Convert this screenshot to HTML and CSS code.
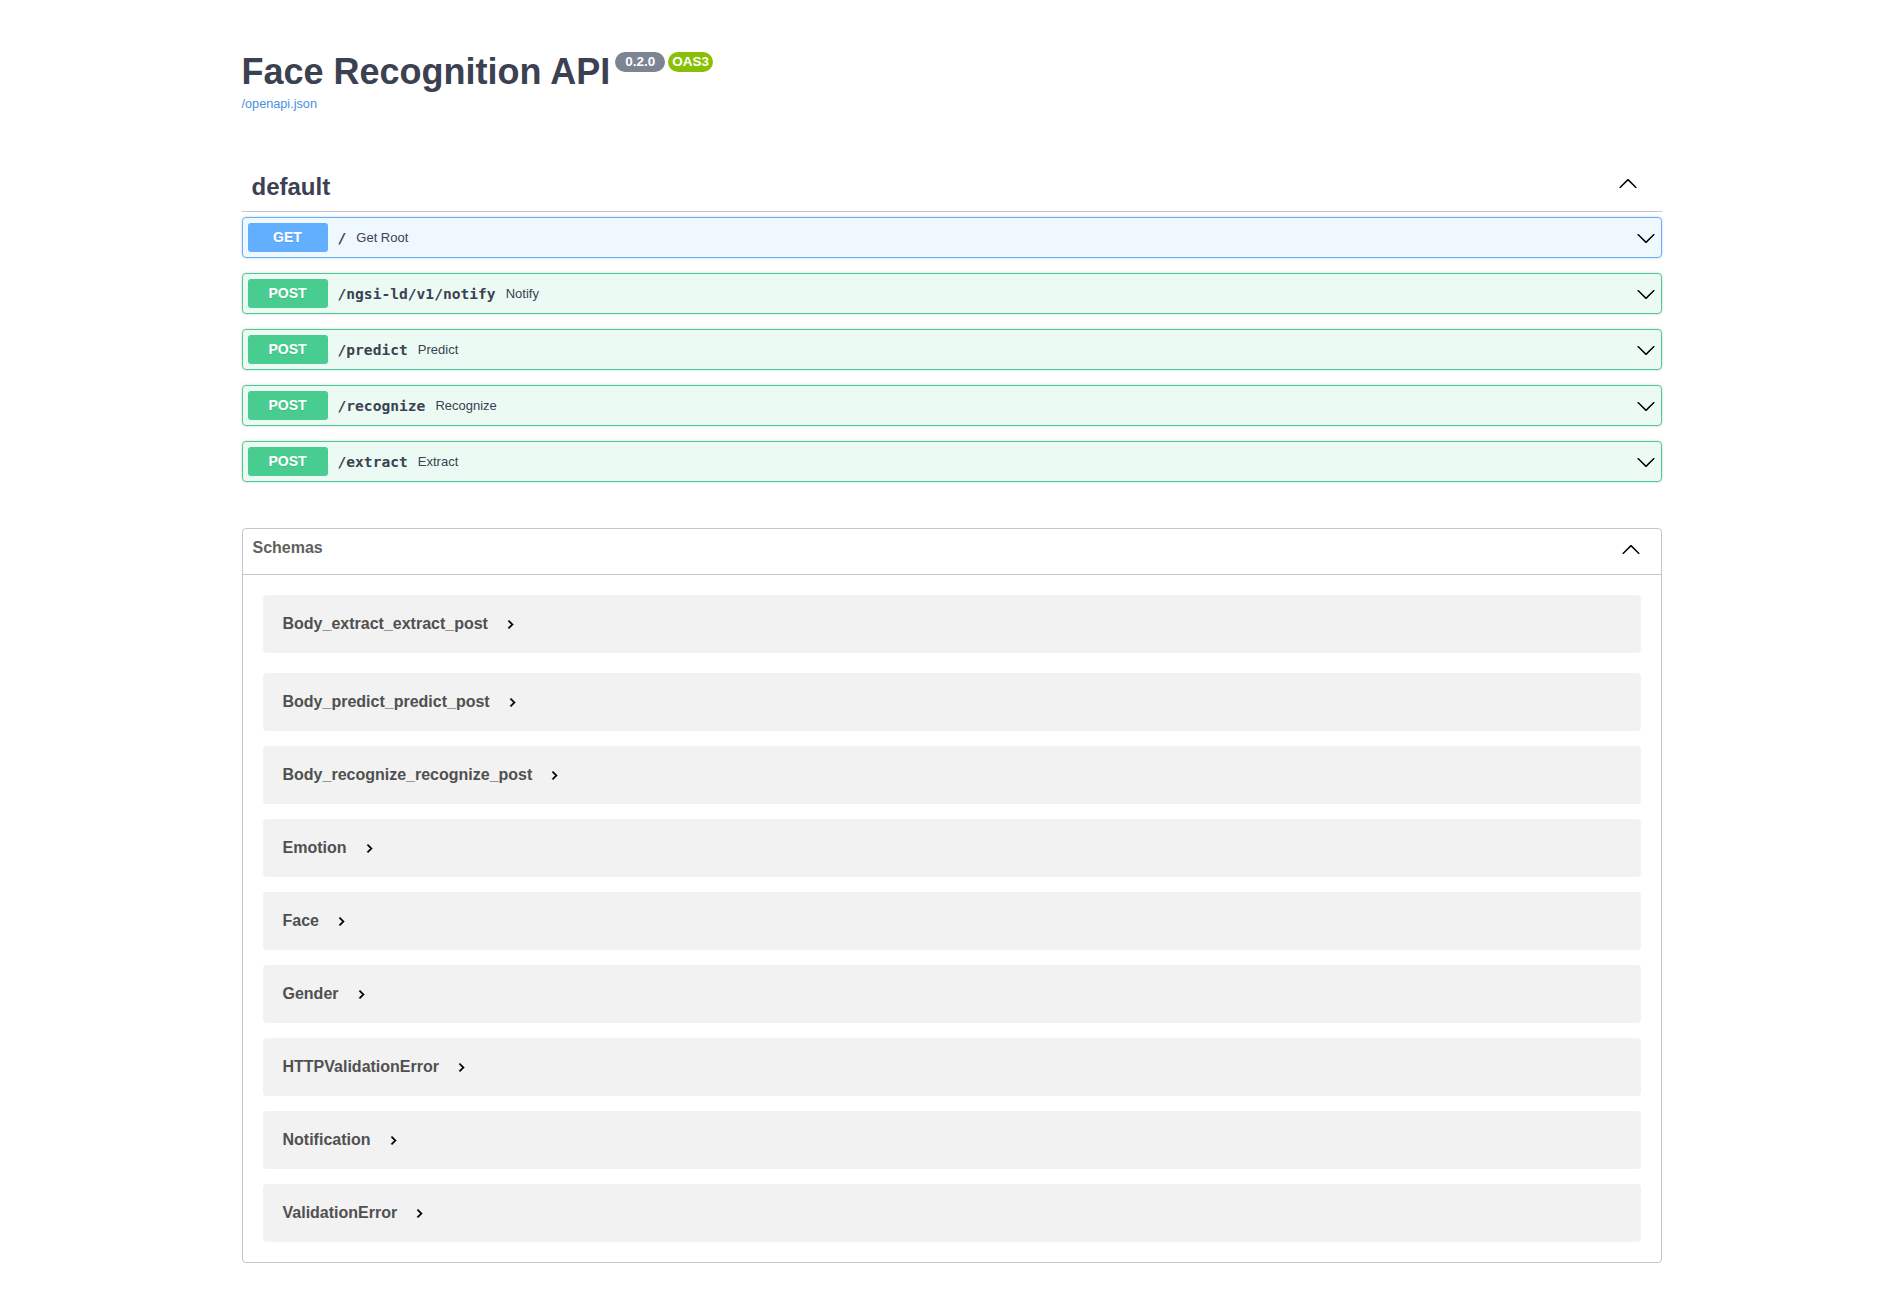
FILE: index.html
```html
<!DOCTYPE html>
<html lang="en">
<head>
<meta charset="utf-8">
<title>Face Recognition API - Swagger UI</title>
<link rel="stylesheet" href="styles.css">
</head>
<body>
<div class="wrapper">
  <div class="info">
    <h2 class="title">
      <span class="title-text">Face Recognition API</span>
      <span class="badge badge-version">0.2.0</span>
      <span class="badge badge-oas">OAS3</span>
    </h2>
    <div class="link-row"><a class="link" href="#">/openapi.json</a></div>
  </div>

  <div class="tag-section">
    <h3 class="tag">
      <span class="tag-name">default</span>
      <svg class="tag-arrow" width="20" height="20" viewBox="0 0 20 20"><path d="M17.418 14.908c.272.268.709.268.979 0s.271-.701 0-.969l-7.908-7.83c-.27-.268-.707-.268-.979 0l-7.908 7.83c-.27.268-.27.701 0 .969.271.268.709.268.979 0L10 7.767l7.418 7.141z"/></svg>
    </h3>

    <div class="opblock opblock-get">
      <div class="summary">
        <span class="method">GET</span>
        <div class="path-desc">
          <span class="path">/</span>
          <span class="desc">Get Root</span>
        </div>
        <svg class="op-arrow" width="20" height="20" viewBox="0 0 20 20"><path d="M17.418 6.109c.272-.268.709-.268.979 0s.271.701 0 .969l-7.908 7.83c-.27.268-.707.268-.979 0l-7.908-7.83c-.27-.268-.27-.701 0-.969.271-.268.709-.268.979 0L10 13.25l7.418-7.141z"/></svg>
      </div>
    </div>

    <div class="opblock opblock-post">
      <div class="summary">
        <span class="method">POST</span>
        <div class="path-desc">
          <span class="path">/ngsi-ld/v1/notify</span>
          <span class="desc">Notify</span>
        </div>
        <svg class="op-arrow" width="20" height="20" viewBox="0 0 20 20"><path d="M17.418 6.109c.272-.268.709-.268.979 0s.271.701 0 .969l-7.908 7.83c-.27.268-.707.268-.979 0l-7.908-7.83c-.27-.268-.27-.701 0-.969.271-.268.709-.268.979 0L10 13.25l7.418-7.141z"/></svg>
      </div>
    </div>

    <div class="opblock opblock-post">
      <div class="summary">
        <span class="method">POST</span>
        <div class="path-desc">
          <span class="path">/predict</span>
          <span class="desc">Predict</span>
        </div>
        <svg class="op-arrow" width="20" height="20" viewBox="0 0 20 20"><path d="M17.418 6.109c.272-.268.709-.268.979 0s.271.701 0 .969l-7.908 7.83c-.27.268-.707.268-.979 0l-7.908-7.83c-.27-.268-.27-.701 0-.969.271-.268.709-.268.979 0L10 13.25l7.418-7.141z"/></svg>
      </div>
    </div>

    <div class="opblock opblock-post">
      <div class="summary">
        <span class="method">POST</span>
        <div class="path-desc">
          <span class="path">/recognize</span>
          <span class="desc">Recognize</span>
        </div>
        <svg class="op-arrow" width="20" height="20" viewBox="0 0 20 20"><path d="M17.418 6.109c.272-.268.709-.268.979 0s.271.701 0 .969l-7.908 7.83c-.27.268-.707.268-.979 0l-7.908-7.83c-.27-.268-.27-.701 0-.969.271-.268.709-.268.979 0L10 13.25l7.418-7.141z"/></svg>
      </div>
    </div>

    <div class="opblock opblock-post">
      <div class="summary">
        <span class="method">POST</span>
        <div class="path-desc">
          <span class="path">/extract</span>
          <span class="desc">Extract</span>
        </div>
        <svg class="op-arrow" width="20" height="20" viewBox="0 0 20 20"><path d="M17.418 6.109c.272-.268.709-.268.979 0s.271.701 0 .969l-7.908 7.83c-.27.268-.707.268-.979 0l-7.908-7.83c-.27-.268-.27-.701 0-.969.271-.268.709-.268.979 0L10 13.25l7.418-7.141z"/></svg>
      </div>
    </div>
  </div>

  <section class="models">
    <h4 class="models-head">
      <span class="models-title">Schemas</span>
      <svg class="models-arrow" width="20" height="20" viewBox="0 0 20 20"><path d="M17.418 14.908c.272.268.709.268.979 0s.271-.701 0-.969l-7.908-7.83c-.27-.268-.707-.268-.979 0l-7.908 7.83c-.27.268-.27.701 0 .969.271.268.709.268.979 0L10 7.767l7.418 7.141z"/></svg>
    </h4>
    <div class="models-list">
      <div class="model"><span class="model-title">Body_extract_extract_post</span><svg class="model-toggle" width="17" height="17" viewBox="0 0 24 24"><path d="M10 6L8.59 7.41 13.17 12l-4.58 4.59L10 18l6-6z"/></svg></div>
      <div class="model"><span class="model-title">Body_predict_predict_post</span><svg class="model-toggle" width="17" height="17" viewBox="0 0 24 24"><path d="M10 6L8.59 7.41 13.17 12l-4.58 4.59L10 18l6-6z"/></svg></div>
      <div class="model"><span class="model-title">Body_recognize_recognize_post</span><svg class="model-toggle" width="17" height="17" viewBox="0 0 24 24"><path d="M10 6L8.59 7.41 13.17 12l-4.58 4.59L10 18l6-6z"/></svg></div>
      <div class="model"><span class="model-title">Emotion</span><svg class="model-toggle" width="17" height="17" viewBox="0 0 24 24"><path d="M10 6L8.59 7.41 13.17 12l-4.58 4.59L10 18l6-6z"/></svg></div>
      <div class="model"><span class="model-title">Face</span><svg class="model-toggle" width="17" height="17" viewBox="0 0 24 24"><path d="M10 6L8.59 7.41 13.17 12l-4.58 4.59L10 18l6-6z"/></svg></div>
      <div class="model"><span class="model-title">Gender</span><svg class="model-toggle" width="17" height="17" viewBox="0 0 24 24"><path d="M10 6L8.59 7.41 13.17 12l-4.58 4.59L10 18l6-6z"/></svg></div>
      <div class="model"><span class="model-title">HTTPValidationError</span><svg class="model-toggle" width="17" height="17" viewBox="0 0 24 24"><path d="M10 6L8.59 7.41 13.17 12l-4.58 4.59L10 18l6-6z"/></svg></div>
      <div class="model"><span class="model-title">Notification</span><svg class="model-toggle" width="17" height="17" viewBox="0 0 24 24"><path d="M10 6L8.59 7.41 13.17 12l-4.58 4.59L10 18l6-6z"/></svg></div>
      <div class="model"><span class="model-title">ValidationError</span><svg class="model-toggle" width="17" height="17" viewBox="0 0 24 24"><path d="M10 6L8.59 7.41 13.17 12l-4.58 4.59L10 18l6-6z"/></svg></div>
    </div>
  </section>
</div>
</body>
</html>
```

FILE: styles.css
```css
html, body {
  margin: 0;
  padding: 0;
  background: #fff;
}

body {
  font-family: "Liberation Sans", Arial, sans-serif;
  color: #3b4151;
}

.wrapper {
  box-sizing: border-box;
  max-width: 1460px;
  margin: 0 auto;
  padding: 0 20px;
}

/* ---------- info ---------- */
.info {
  padding-top: 51px;
}

.title {
  display: flex;
  align-items: flex-start;
  margin: 0;
  font-size: 36px;
  line-height: 41px;
  font-weight: 700;
  color: #3b4151;
}

.badge {
  display: inline-block;
  margin-top: 1px;
  height: 20px;
  line-height: 20px;
  font-size: 13.5px;
  font-weight: 700;
  color: #fff;
  border-radius: 57px;
}

.badge-version {
  margin-left: 5px;
  padding: 0 10px;
  background: #7d8492;
}

.badge-oas {
  margin-left: 3px;
  padding: 0 4px;
  background: #89bf04;
}

.link-row {
  margin-top: 3px;
  line-height: 15px;
}

.link {
  font-size: 12.7px;
  color: #4990e2;
  text-decoration: none;
}

/* ---------- tag section ---------- */
.tag-section {
  display: flex;
  flex-direction: column;
  margin-top: 51px;
}

.tag {
  display: flex;
  align-items: flex-start;
  margin: 0 0 5px;
  padding: 10px 20px 10px 10px;
  border-bottom: 1px solid rgba(59, 65, 81, 0.3);
  font-size: 24px;
  line-height: 28px;
  font-weight: 700;
  color: #3b4151;
}

.tag-name {
  flex: 1;
}

.tag-arrow {
  margin-right: 4px;
  fill: #000;
}

/* ---------- operation blocks ---------- */
.opblock {
  margin: 0 0 15px;
  border: 1px solid #000;
  border-radius: 4px;
  box-shadow: 0 0 3px rgba(0, 0, 0, 0.19);
}

.opblock-get {
  background: rgba(97, 175, 254, 0.1);
  border-color: #61affe;
}

.opblock-post {
  background: rgba(73, 204, 144, 0.1);
  border-color: #49cc90;
}

.summary {
  display: flex;
  align-items: center;
  padding: 5px;
}

.method {
  min-width: 80px;
  padding: 6px 0;
  border-radius: 3px;
  font-size: 14px;
  line-height: 17px;
  font-weight: 700;
  color: #fff;
  text-align: center;
  text-shadow: 0 1px 0 rgba(0, 0, 0, 0.1);
}

.opblock-get .method {
  background: #61affe;
}

.opblock-post .method {
  background: #49cc90;
}

.path-desc {
  flex: 1;
  display: flex;
  align-items: center;
  gap: 10px;
  padding: 0 10px;
}

.path {
  font-family: "DejaVu Sans Mono", "Liberation Mono", monospace;
  font-size: 14.6px;
  font-weight: 700;
  color: #3b4151;
}

.desc {
  font-size: 13px;
  color: #3b4151;
}

.op-arrow {
  flex: none;
  fill: #000;
}

/* ---------- models ---------- */
.models {
  margin: 31px 0 30px;
  border: 1px solid rgba(59, 65, 81, 0.3);
  border-radius: 4px;
}

.models-head {
  display: flex;
  align-items: flex-start;
  min-height: 25px;
  margin: 0;
  padding: 10px 20px 10px 10px;
  border-bottom: 1px solid rgba(59, 65, 81, 0.3);
  font-size: 16px;
  font-weight: 700;
  color: #606060;
}

.models-title {
  flex: 1;
}

.models-arrow {
  fill: #000;
}

.models-list {
  padding-bottom: 5px;
}

.model {
  display: flex;
  align-items: center;
  height: 58px;
  margin: 0 20px 15px;
  padding-left: 20px;
  border-radius: 4px;
  background: rgba(0, 0, 0, 0.05);
}

.model:first-child {
  margin: 20px;
}

.model-title {
  font-size: 16px;
  font-weight: 700;
  color: #505050;
}

.model-toggle {
  margin-left: 14px;
  fill: #000;
  stroke: #000;
  stroke-width: 0.7;
}
```
